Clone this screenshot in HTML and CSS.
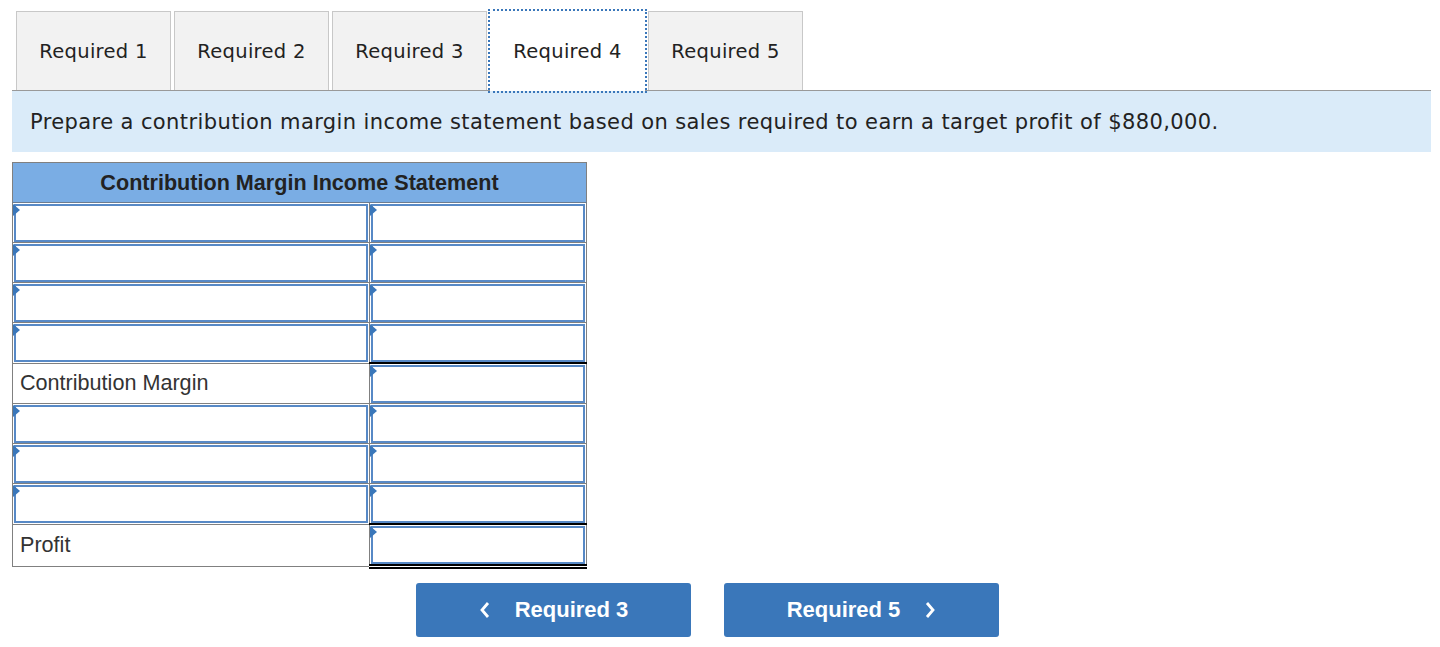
FILE: index.html
```html
<!DOCTYPE html>
<html>
    <head>
        <meta charset="utf-8">
        <title>Required 4</title>
        <link rel="stylesheet" href="styles.css">
    </head>
    <body>
        <div class="page">
            <ul class="tabs">
                <li class="tab">Required 1</li>
                <li class="tab">Required 2</li>
                <li class="tab">Required 3</li>
                <li class="tab active">Required 4</li>
                <li class="tab">Required 5</li>
            </ul>
            <div class="prompt">
                Prepare a contribution margin income statement based on sales required to earn a target profit of $880,000.
            </div>
            <table class="statement">
                <tr>
                    <th colspan="2">Contribution Margin Income Statement</th>
                </tr>
                <tr>
                    <td class="entry name"><span class="flag"></span><input type="text"></td>
                    <td class="entry"><span class="flag"></span><input type="text"></td>
                </tr>
                <tr>
                    <td class="entry"><span class="flag"></span><input type="text"></td>
                    <td class="entry"><span class="flag"></span><input type="text"></td>
                </tr>
                <tr>
                    <td class="entry"><span class="flag"></span><input type="text"></td>
                    <td class="entry"><span class="flag"></span><input type="text"></td>
                </tr>
                <tr>
                    <td class="entry"><span class="flag"></span><input type="text"></td>
                    <td class="entry subtotal"><span class="flag"></span><input type="text"></td>
                </tr>
                <tr>
                    <td class="label">Contribution Margin</td>
                    <td class="entry"><span class="flag"></span><input type="text"></td>
                </tr>
                <tr>
                    <td class="entry"><span class="flag"></span><input type="text"></td>
                    <td class="entry"><span class="flag"></span><input type="text"></td>
                </tr>
                <tr>
                    <td class="entry"><span class="flag"></span><input type="text"></td>
                    <td class="entry"><span class="flag"></span><input type="text"></td>
                </tr>
                <tr>
                    <td class="entry"><span class="flag"></span><input type="text"></td>
                    <td class="entry subtotal"><span class="flag"></span><input type="text"></td>
                </tr>
                <tr>
                    <td class="label">Profit</td>
                    <td class="entry total"><span class="flag"></span><input type="text"></td>
                </tr>
            </table>
            <div class="nav">
                <button class="navbtn prev">
                    <svg width="12" height="18" viewBox="0 0 12 18"><path d="M9 2 L3 9 L9 16" fill="none" stroke="#fff" stroke-width="2.8"/></svg>
                    <span>Required 3</span>
                </button>
                <button class="navbtn next">
                    <span>Required 5</span>
                    <svg width="12" height="18" viewBox="0 0 12 18"><path d="M3 2 L9 9 L3 16" fill="none" stroke="#fff" stroke-width="2.8"/></svg>
                </button>
            </div>
        </div>
    </body>
</html>
```

FILE: styles.css
```css
body {
    margin: 8px;
    background: #fff;
    color: #222;
}
.page {
    padding: 3px 1px 3px 4px;
}
.tabs {
    list-style: none;
    margin: 0;
    padding: 0 0 0 4px;
    display: flex;
    gap: 3px;
    border-bottom: 1px solid #999;
    height: 79px;
}
.tab {
    width: 153px;
    height: 78px;
    border: 1px solid #c8c8c8;
    border-bottom: none;
    background: #f2f2f2;
    font-family: "DejaVu Sans", Verdana, sans-serif;
    font-size: 19.5px;
    letter-spacing: 0.3px;
    color: #222;
    display: flex;
    align-items: center;
    justify-content: center;
}
.tab.active {
    background: #fff;
    height: 79px;
    border-color: #fff;
    outline: 2px dotted #3a77ba;
    outline-offset: 0;
    position: relative;
    z-index: 1;
}
.prompt {
    background: #daebf9;
    height: 61px;
    display: flex;
    align-items: center;
    padding-left: 18px;
    font-family: "DejaVu Sans", Verdana, sans-serif;
    font-size: 21px;
    letter-spacing: 0.4px;
    color: #222;
}
.statement {
    margin-top: 10px;
    border-collapse: collapse;
    width: 575px;
    font-family: "Liberation Sans", Arial, sans-serif;
}
.statement th {
    background: #7aade4;
    height: 39px;
    border: 1px solid #808080;
    border-bottom: 1px solid #6c7c90;
    font-size: 21.6px;
    font-weight: bold;
    color: #222;
    padding: 0;
}
.statement td {
    border: 1px solid #808080;
    height: 39px;
    padding: 0 1px;
    vertical-align: middle;
}
.statement td.entry {
    position: relative;
}
.statement td.name {
    width: 354px;
}
.statement td.subtotal {
    border-bottom: 2px solid #000;
}
.statement td.total {
    border-bottom: 5px double #000;
}
.statement td.label {
    font-size: 21.6px;
    color: #333;
    padding-left: 7px;
}
.statement input {
    display: block;
    box-sizing: border-box;
    width: 100%;
    height: 38px;
    margin: 0;
    border: 2px solid #5789c6;
    background: #fff;
}
.flag {
    position: absolute;
    left: 0;
    top: 1px;
    width: 0;
    height: 0;
    border-left: 7px solid #3a77ba;
    border-top: 6px solid transparent;
    border-bottom: 6px solid transparent;
}
.nav {
    display: flex;
    gap: 33px;
    margin-top: 14px;
    padding-left: 404px;
}
.navbtn {
    width: 275px;
    height: 54px;
    border: none;
    border-radius: 3px;
    background: #3a77ba;
    color: #fff;
    font-family: "Liberation Sans", Arial, sans-serif;
    font-size: 22px;
    font-weight: bold;
    display: flex;
    align-items: center;
    justify-content: center;
    gap: 24px;
    padding: 0;
}
```
